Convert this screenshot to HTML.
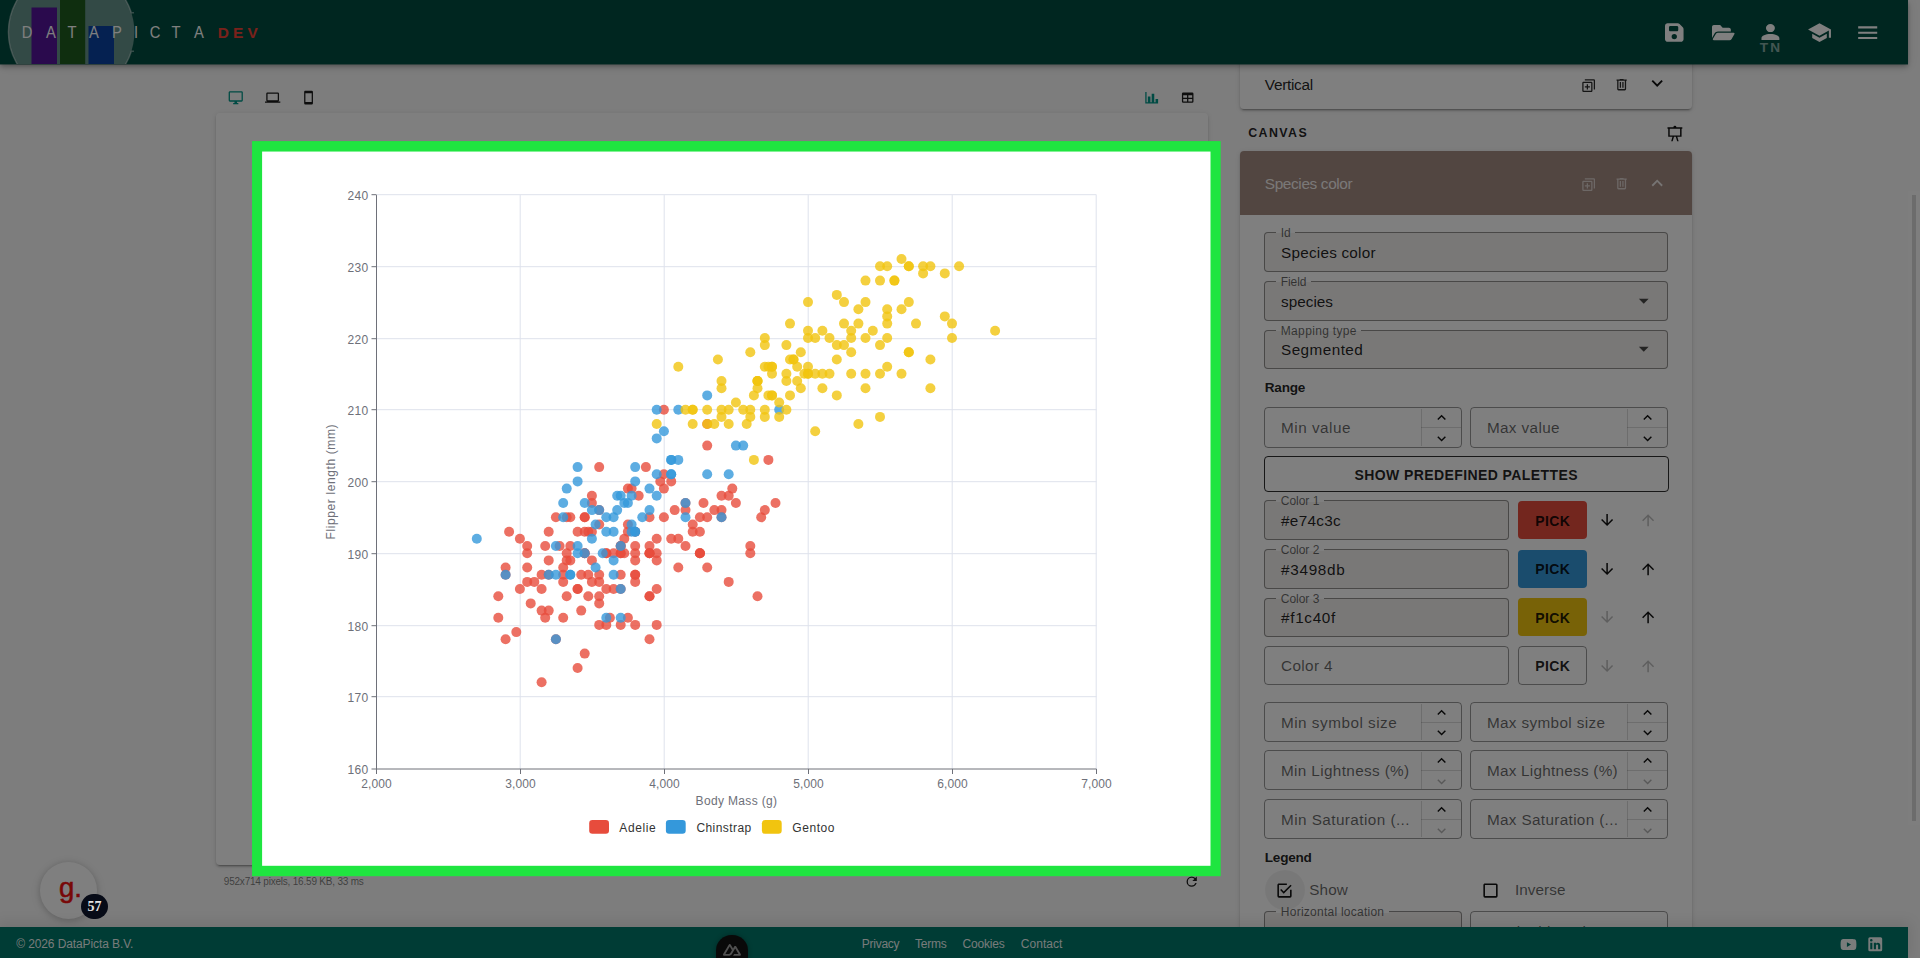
<!DOCTYPE html>
<html lang="en"><head><meta charset="utf-8"><title>DataPicta DEV</title>
<style>
html,body{margin:0;padding:0}
body{width:1920px;height:958px;overflow:hidden;position:relative;background:#fafafa;font-family:"Liberation Sans",sans-serif}
#app,#ov{position:absolute;left:0;top:0;width:1920px;height:958px;overflow:hidden}
#app{z-index:0}
#ov{background:rgba(0,0,0,.5);z-index:10}
svg{display:block;overflow:visible}
</style></head><body>
<div id="app"><div style="position:absolute;left:0;top:64px;width:1908px;height:1px;background:rgba(0,77,64,.45);z-index:6"></div><div style="position:absolute;left:0;top:0;width:1908px;height:64px;background:#004d40;z-index:5;box-shadow:0 2px 4px -1px rgba(0,0,0,.2),0 4px 5px 0 rgba(0,0,0,.14),0 1px 10px 0 rgba(0,0,0,.12)"><svg style="position:absolute;left:0;top:0;width:300px;height:64px;overflow:hidden" viewBox="0 0 300 64"><circle cx="71.4" cy="32" r="63" fill="rgba(255,255,255,.4)"/><rect x="31.5" y="7.5" width="25.5" height="60" fill="#54149a"/><rect x="60" y="-2" width="25.2" height="70" fill="#1f5c1f"/><rect x="88.5" y="26" width="25.5" height="40" fill="#0a43a2"/><path d="M134 12.8H131.4A63 63 0 1 0 131.4 51.2H134" fill="none" stroke="rgba(255,255,255,.42)" stroke-width="1.4"/></svg><span id="t1" style="position:absolute;left:27.3px;top:32.3px;transform:translate(-50%,-50%);white-space:nowrap;font:400 16.4px/1 'Liberation Sans',sans-serif;color:#fff;letter-spacing:0.000px;transform:translate(-50%,-50%) scaleX(.9);">D</span><span id="t2" style="position:absolute;left:50.6px;top:32.3px;transform:translate(-50%,-50%);white-space:nowrap;font:400 16.4px/1 'Liberation Sans',sans-serif;color:#fff;letter-spacing:0.000px;transform:translate(-50%,-50%) scaleX(.9);">A</span><span id="t3" style="position:absolute;left:71.6px;top:32.3px;transform:translate(-50%,-50%);white-space:nowrap;font:400 16.4px/1 'Liberation Sans',sans-serif;color:#fff;letter-spacing:0.000px;transform:translate(-50%,-50%) scaleX(.9);">T</span><span id="t4" style="position:absolute;left:94.1px;top:32.3px;transform:translate(-50%,-50%);white-space:nowrap;font:400 16.4px/1 'Liberation Sans',sans-serif;color:#fff;letter-spacing:0.000px;transform:translate(-50%,-50%) scaleX(.9);">A</span><span id="t5" style="position:absolute;left:116.6px;top:32.3px;transform:translate(-50%,-50%);white-space:nowrap;font:400 16.4px/1 'Liberation Sans',sans-serif;color:#fff;letter-spacing:0.000px;transform:translate(-50%,-50%) scaleX(.9);">P</span><span id="t6" style="position:absolute;left:135.7px;top:32.3px;transform:translate(-50%,-50%);white-space:nowrap;font:400 16.4px/1 'Liberation Sans',sans-serif;color:#fff;letter-spacing:0.000px;transform:translate(-50%,-50%) scaleX(.9);">I</span><span id="t7" style="position:absolute;left:154.7px;top:32.3px;transform:translate(-50%,-50%);white-space:nowrap;font:400 16.4px/1 'Liberation Sans',sans-serif;color:#fff;letter-spacing:0.000px;transform:translate(-50%,-50%) scaleX(.9);">C</span><span id="t8" style="position:absolute;left:176.3px;top:32.3px;transform:translate(-50%,-50%);white-space:nowrap;font:400 16.4px/1 'Liberation Sans',sans-serif;color:#fff;letter-spacing:0.000px;transform:translate(-50%,-50%) scaleX(.9);">T</span><span id="t9" style="position:absolute;left:198.5px;top:32.3px;transform:translate(-50%,-50%);white-space:nowrap;font:400 16.4px/1 'Liberation Sans',sans-serif;color:#fff;letter-spacing:0.000px;transform:translate(-50%,-50%) scaleX(.9);">A</span><span id="dev" style="position:absolute;left:217.7px;top:32.9px;transform:translateY(-50%);white-space:nowrap;font:700 15.4px/1 'Liberation Sans',sans-serif;color:#f44336;letter-spacing:4.249px;">DEV</span><svg style="position:absolute;left:1664.72px;top:21.60px;width:18.55px;height:21.20px;" viewBox="0 0 448 512" preserveAspectRatio="none"><path fill="#fff" d="M64 32C28.7 32 0 60.7 0 96v320c0 35.3 28.7 64 64 64h320c35.3 0 64-28.7 64-64V173.3c0-17-6.7-33.3-18.7-45.3L352 50.7c-12-12-28.3-18.7-45.3-18.7zm32 96c0-17.7 14.3-32 32-32h160c17.7 0 32 14.3 32 32v64c0 17.7-14.3 32-32 32H128c-17.7 0-32-14.3-32-32zm128 160a64 64 0 1 1 0 128 64 64 0 1 1 0-128"/></svg><svg style="position:absolute;left:1711.50px;top:21.85px;width:22.60px;height:21.31px" viewBox="0 0 576 512"><path fill="#fff" d="M572.694 292.093L500.27 416.248A63.997 63.997 0 0 1 444.989 448H45.025c-18.523 0-30.064-20.093-20.731-36.093l72.424-124.155A64 64 0 0 1 152 256h399.964c18.523 0 30.064 20.093 20.73 36.093zM152 224h328v-48c0-26.51-21.49-48-48-48H272l-64-64H48C21.49 64 0 85.49 0 112v278.046l69.077-118.418C86.214 242.25 117.989 224 152 224z"/></svg><svg style="position:absolute;left:1757.38px;top:19.88px;width:26.85px;height:24.15px;" viewBox="0 0 24 24" preserveAspectRatio="none"><path fill="#fff" d="M12 4a4 4 0 0 1 4 4 4 4 0 0 1-4 4 4 4 0 0 1-4-4 4 4 0 0 1 4-4m0 10c4.42 0 8 1.79 8 4v2H4v-2c0-2.21 3.58-4 8-4"/></svg><span id="tn" style="position:absolute;left:1771.1px;top:47.6px;transform:translate(-50%,-50%);white-space:nowrap;font:700 13.6px/1 'Liberation Sans',sans-serif;color:rgba(255,255,255,.55);letter-spacing:2.286px;">TN</span><svg style="position:absolute;left:1806.85px;top:19.80px;width:25.00px;height:25.00px;" viewBox="0 0 24 24" preserveAspectRatio="none"><path fill="#fff" d="M12 3 1 9l11 6 9-4.91V17h2V9M5 13.18v4L12 21l7-3.82v-4L12 17z"/></svg><svg style="position:absolute;left:1854.80px;top:19.55px;width:25.40px;height:25.40px;" viewBox="0 0 24 24" preserveAspectRatio="none"><path fill="#fff" d="M3 6h18v2H3zm0 5h18v2H3zm0 5h18v2H3z"/></svg></div><svg style="position:absolute;left:228.25px;top:89.60px;width:15.50px;height:15.50px;" viewBox="0 0 24 24" preserveAspectRatio="none"><path fill="#009688" d="M21 16H3V4h18m0-2H3c-1.11 0-2 .89-2 2v12a2 2 0 0 0 2 2h7v2H8v2h8v-2h-2v-2h7a2 2 0 0 0 2-2V4a2 2 0 0 0-2-2"/></svg><svg style="position:absolute;left:264.70px;top:89.55px;width:15.30px;height:15.30px;" viewBox="0 0 24 24" preserveAspectRatio="none"><path fill="#1a1a1a" d="M4 6h16v10H4m16 2a2 2 0 0 0 2-2V6a2 2 0 0 0-2-2H4c-1.11 0-2 .89-2 2v10a2 2 0 0 0 2 2H0v2h24v-2z"/></svg><svg style="position:absolute;left:301.05px;top:89.65px;width:15.10px;height:15.10px;" viewBox="0 0 24 24" preserveAspectRatio="none"><path fill="#1a1a1a" d="M17 19H7V5h10m0-4H7c-1.11 0-2 .89-2 2v18a2 2 0 0 0 2 2h10a2 2 0 0 0 2-2V3a2 2 0 0 0-2-2"/></svg><svg style="position:absolute;left:1143.70px;top:89.90px;width:15.40px;height:15.40px;" viewBox="0 0 24 24" preserveAspectRatio="none"><path fill="#009688" d="M22 21H2V3h2v16h2v-9h4v9h2V6h4v13h2v-5h4z"/></svg><svg style="position:absolute;left:1180.20px;top:89.50px;width:15.40px;height:15.40px;" viewBox="0 0 24 24" preserveAspectRatio="none"><path fill="#1a1a1a" d="M5 4h14a2 2 0 0 1 2 2v12a2 2 0 0 1-2 2H5a2 2 0 0 1-2-2V6a2 2 0 0 1 2-2m0 4v4h6V8zm8 0v4h6V8zm-8 6v4h6v-4zm8 0v4h6v-4z"/></svg><div style="position:absolute;left:216px;top:113px;width:992px;height:752px;background:#fff;border-radius:4px;box-shadow:0 3px 1px -2px rgba(0,0,0,.2),0 2px 2px 0 rgba(0,0,0,.14),0 1px 5px 0 rgba(0,0,0,.12)"></div><span id="pix" style="position:absolute;left:223.8px;top:881.7px;transform:translateY(-50%);white-space:nowrap;font:400 10px/1 'Liberation Sans',sans-serif;color:rgba(0,0,0,.52);letter-spacing:-0.207px;">952x714 pixels, 16.59 KB, 33 ms</span><svg style="position:absolute;left:1184.10px;top:873.90px;width:15.40px;height:15.40px;" viewBox="0 0 24 24" preserveAspectRatio="none"><path fill="#1a1a1a" d="M17.65 6.35A7.96 7.96 0 0 0 12 4a8 8 0 0 0-8 8 8 8 0 0 0 8 8c3.73 0 6.84-2.55 7.73-6h-2.08A5.99 5.99 0 0 1 12 18a6 6 0 0 1-6-6 6 6 0 0 1 6-6c1.66 0 3.14.69 4.22 1.78L13 11h7V4z"/></svg><div style="position:absolute;left:40px;top:862px;width:57px;height:57px;border-radius:50%;background:#fff;box-shadow:0 1px 6px rgba(0,0,0,.18),0 2px 12px rgba(0,0,0,.08)"></div><span id="g" style="position:absolute;left:59.0px;top:887.6px;transform:translateY(-50%);white-space:nowrap;font:400 27.5px/1 'Liberation Sans',sans-serif;color:#f01010;letter-spacing:0.000px;-webkit-text-stroke:.55px #f01010;">g.</span><div style="position:absolute;left:1240.3px;top:40px;width:451.5px;height:69px;background:#fff;border-radius:4px;box-shadow:0 3px 1px -2px rgba(0,0,0,.2),0 2px 2px 0 rgba(0,0,0,.14),0 1px 5px 0 rgba(0,0,0,.12);"></div><span id="vert" style="position:absolute;left:1264.8px;top:84.6px;transform:translateY(-50%);white-space:nowrap;font:400 15.4px/1 'Liberation Sans',sans-serif;color:rgba(0,0,0,.87);letter-spacing:-0.309px;">Vertical</span><svg style="position:absolute;left:1581.05px;top:77.70px;width:15.30px;height:15.30px;transform:rotate(180deg);" viewBox="0 0 24 24" preserveAspectRatio="none"><path fill="#2a2a2a" d="M18 11h-3v3h-2v-3h-3V9h3V6h2v3h3m2-5v12H8V4zm0-2H8c-1.1 0-2 .9-2 2v12a2 2 0 0 0 2 2h12c1.11 0 2-.89 2-2V4a2 2 0 0 0-2-2M4 6H2v14a2 2 0 0 0 2 2h14v-2H4z"/></svg><svg style="position:absolute;left:1613.65px;top:77.35px;width:15.30px;height:15.30px;" viewBox="0 0 24 24" preserveAspectRatio="none"><path fill="#2a2a2a" d="M9 3v1H4v2h1v13a2 2 0 0 0 2 2h10a2 2 0 0 0 2-2V6h1V4h-5V3zM7 6h10v13H7zm2 2v9h2V8zm4 0v9h2V8z"/></svg><svg style="position:absolute;left:1645.65px;top:71.80px;width:22.40px;height:22.40px;" viewBox="0 0 24 24" preserveAspectRatio="none"><path fill="#111" d="M7.41 8.58 12 13.17l4.59-4.59L18 10l-6 6-6-6z"/></svg><span id="canvas" style="position:absolute;left:1248.2px;top:132.9px;transform:translateY(-50%);white-space:nowrap;font:700 12.4px/1 'Liberation Sans',sans-serif;color:rgba(0,0,0,.87);letter-spacing:1.432px;">CANVAS</span><svg style="position:absolute;left:1666.10px;top:125.20px;width:17.80px;height:17.80px;" viewBox="0 0 24 24" preserveAspectRatio="none"><path fill="#111" d="M2 3h8a2 2 0 0 1 2-2 2 2 0 0 1 2 2h8v2h-1v11h-5.75L17 22h-2l-1.75-6h-2.5L9 22H7l1.75-6H3V5H2zm3 2v9h14V5z"/></svg><div style="position:absolute;left:1240.3px;top:151.3px;width:451.5px;height:848.7px;background:#fff;border-radius:4px 4px 0 0;box-shadow:0 3px 1px -2px rgba(0,0,0,.2),0 2px 2px 0 rgba(0,0,0,.14),0 1px 5px 0 rgba(0,0,0,.12);"></div><div style="position:absolute;left:1240.3px;top:151.3px;width:451.5px;height:64.19999999999999px;background:#a58c83;border-radius:4px 4px 0 0;"></div><span id="spc" style="position:absolute;left:1264.8px;top:184.4px;transform:translateY(-50%);white-space:nowrap;font:400 15.4px/1 'Liberation Sans',sans-serif;color:rgba(255,255,255,.9);letter-spacing:-0.377px;">Species color</span><svg style="position:absolute;left:1581.05px;top:176.70px;width:15.30px;height:15.30px;transform:rotate(180deg);" viewBox="0 0 24 24" preserveAspectRatio="none"><path fill="rgba(255,255,255,.6)" d="M18 11h-3v3h-2v-3h-3V9h3V6h2v3h3m2-5v12H8V4zm0-2H8c-1.1 0-2 .9-2 2v12a2 2 0 0 0 2 2h12c1.11 0 2-.89 2-2V4a2 2 0 0 0-2-2M4 6H2v14a2 2 0 0 0 2 2h14v-2H4z"/></svg><svg style="position:absolute;left:1613.65px;top:176.35px;width:15.30px;height:15.30px;" viewBox="0 0 24 24" preserveAspectRatio="none"><path fill="rgba(255,255,255,.6)" d="M9 3v1H4v2h1v13a2 2 0 0 0 2 2h10a2 2 0 0 0 2-2V6h1V4h-5V3zM7 6h10v13H7zm2 2v9h2V8zm4 0v9h2V8z"/></svg><svg style="position:absolute;left:1645.65px;top:172.40px;width:22.40px;height:22.40px;" viewBox="0 0 24 24" preserveAspectRatio="none"><path fill="rgba(255,255,255,.8)" d="M7.41 15.41 12 10.83l4.59 4.58L18 14l-6-6-6 6z"/></svg><div style="position:absolute;left:1264.1px;top:231.9px;width:404.3000000000002px;height:39.99999999999997px;box-sizing:border-box;border:1px solid rgba(0,0,0,.4);border-radius:4px;background:rgba(161,136,127,.13);"></div><div style="position:absolute;left:1276.1px;top:231.4px;width:18.59999999999991px;height:3.0px;background:#fff;"></div><div style="position:absolute;left:1276.1px;top:233.4px;width:18.59999999999991px;height:1.0px;background:rgba(161,136,127,.13);"></div><span id="idl" style="position:absolute;left:1280.8px;top:232.9px;transform:translateY(-50%);white-space:nowrap;font:400 12px/1 'Liberation Sans',sans-serif;color:rgba(0,0,0,.6);letter-spacing:-0.205px;">Id</span><span id="idv" style="position:absolute;left:1281.0px;top:252.79999999999998px;transform:translateY(-50%);white-space:nowrap;font:400 15.3px/1 'Liberation Sans',sans-serif;color:rgba(0,0,0,.87);letter-spacing:0.228px;">Species color</span><div style="position:absolute;left:1264.1px;top:280.7px;width:404.3000000000002px;height:39.900000000000034px;box-sizing:border-box;border:1px solid rgba(0,0,0,.4);border-radius:4px;background:rgba(161,136,127,.13);"></div><div style="position:absolute;left:1276.1px;top:280.2px;width:34.5px;height:3.0px;background:#fff;"></div><div style="position:absolute;left:1276.1px;top:282.2px;width:34.5px;height:1.0px;background:rgba(161,136,127,.13);"></div><span id="fldl" style="position:absolute;left:1280.8px;top:281.7px;transform:translateY(-50%);white-space:nowrap;font:400 12px/1 'Liberation Sans',sans-serif;color:rgba(0,0,0,.6);letter-spacing:-0.103px;">Field</span><span id="fldv" style="position:absolute;left:1281.0px;top:301.54999999999995px;transform:translateY(-50%);white-space:nowrap;font:400 15.3px/1 'Liberation Sans',sans-serif;color:rgba(0,0,0,.87);letter-spacing:0.018px;">species</span><svg style="position:absolute;left:1631.95px;top:288.75px;width:23.50px;height:23.50px;" viewBox="0 0 24 24" preserveAspectRatio="none"><path fill="rgba(0,0,0,.7)" d="m7 10 5 5 5-5z"/></svg><div style="position:absolute;left:1264.1px;top:329.5px;width:404.3000000000002px;height:39.5px;box-sizing:border-box;border:1px solid rgba(0,0,0,.4);border-radius:4px;background:rgba(161,136,127,.13);"></div><div style="position:absolute;left:1276.1px;top:329px;width:85.0px;height:3px;background:#fff;"></div><div style="position:absolute;left:1276.1px;top:331px;width:85.0px;height:1px;background:rgba(161,136,127,.13);"></div><span id="mapl" style="position:absolute;left:1280.8px;top:330.5px;transform:translateY(-50%);white-space:nowrap;font:400 12px/1 'Liberation Sans',sans-serif;color:rgba(0,0,0,.6);letter-spacing:0.329px;">Mapping type</span><span id="mapv" style="position:absolute;left:1281.0px;top:350.15px;transform:translateY(-50%);white-space:nowrap;font:400 15.3px/1 'Liberation Sans',sans-serif;color:rgba(0,0,0,.87);letter-spacing:0.450px;">Segmented</span><svg style="position:absolute;left:1631.95px;top:337.45px;width:23.50px;height:23.50px;" viewBox="0 0 24 24" preserveAspectRatio="none"><path fill="rgba(0,0,0,.7)" d="m7 10 5 5 5-5z"/></svg><span id="range" style="position:absolute;left:1264.8px;top:388.0px;transform:translateY(-50%);white-space:nowrap;font:700 13.6px/1 'Liberation Sans',sans-serif;color:rgba(0,0,0,.87);letter-spacing:-0.270px;">Range</span><div style="position:absolute;left:1264.1px;top:407.3px;width:198.10000000000014px;height:40.599999999999966px;box-sizing:border-box;border:1px solid rgba(0,0,0,.4);border-radius:4px;background:transparent;"></div><span id="minvp" style="position:absolute;left:1281.0px;top:428.3px;transform:translateY(-50%);white-space:nowrap;font:400 15.3px/1 'Liberation Sans',sans-serif;color:rgba(0,0,0,.6);letter-spacing:0.503px;">Min value</span><div style="position:absolute;left:1420.5px;top:408.8px;width:1.0px;height:37.599999999999966px;background:rgba(0,0,0,.14);"></div><div style="position:absolute;left:1420.5px;top:427.1px;width:40.200000000000045px;height:1.0px;background:rgba(0,0,0,.14);"></div><svg style="position:absolute;left:1432.80px;top:409.20px;width:17.20px;height:17.20px;" viewBox="0 0 24 24" preserveAspectRatio="none"><path fill="#111" d="M7.41 15.41 12 10.83l4.59 4.58L18 14l-6-6-6 6z"/></svg><svg style="position:absolute;left:1432.80px;top:430.00px;width:17.20px;height:17.20px;" viewBox="0 0 24 24" preserveAspectRatio="none"><path fill="#111" d="M7.41 8.58 12 13.17l4.59-4.59L18 10l-6 6-6-6z"/></svg><div style="position:absolute;left:1470.0px;top:407.3px;width:198.4000000000001px;height:40.599999999999966px;box-sizing:border-box;border:1px solid rgba(0,0,0,.4);border-radius:4px;background:transparent;"></div><span id="maxvp" style="position:absolute;left:1486.9px;top:428.3px;transform:translateY(-50%);white-space:nowrap;font:400 15.3px/1 'Liberation Sans',sans-serif;color:rgba(0,0,0,.6);letter-spacing:0.365px;">Max value</span><div style="position:absolute;left:1626.7px;top:408.8px;width:1.0px;height:37.599999999999966px;background:rgba(0,0,0,.14);"></div><div style="position:absolute;left:1626.7px;top:427.1px;width:40.200000000000045px;height:1.0px;background:rgba(0,0,0,.14);"></div><svg style="position:absolute;left:1639.00px;top:409.20px;width:17.20px;height:17.20px;" viewBox="0 0 24 24" preserveAspectRatio="none"><path fill="#111" d="M7.41 15.41 12 10.83l4.59 4.58L18 14l-6-6-6 6z"/></svg><svg style="position:absolute;left:1639.00px;top:430.00px;width:17.20px;height:17.20px;" viewBox="0 0 24 24" preserveAspectRatio="none"><path fill="#111" d="M7.41 8.58 12 13.17l4.59-4.59L18 10l-6 6-6-6z"/></svg><div style="position:absolute;left:1264.0px;top:456.0px;width:404.5px;height:36.0px;box-sizing:border-box;border:1.3px solid rgba(0,0,0,.82);border-radius:4px;"></div><span id="btn" style="position:absolute;left:1466.2px;top:474.6px;transform:translate(-50%,-50%);white-space:nowrap;font:700 14px/1 'Liberation Sans',sans-serif;color:rgba(0,0,0,.87);letter-spacing:0.406px;">SHOW PREDEFINED PALETTES</span><div style="position:absolute;left:1264.1px;top:500.4px;width:244.9000000000001px;height:39.700000000000045px;box-sizing:border-box;border:1px solid rgba(0,0,0,.4);border-radius:4px;background:rgba(161,136,127,.13);"></div><div style="position:absolute;left:1276.1px;top:499.9px;width:47.5px;height:3.0px;background:#fff;"></div><div style="position:absolute;left:1276.1px;top:501.9px;width:47.5px;height:1.0px;background:rgba(161,136,127,.13);"></div><span id="c0l" style="position:absolute;left:1280.8px;top:501.4px;transform:translateY(-50%);white-space:nowrap;font:400 12px/1 'Liberation Sans',sans-serif;color:rgba(0,0,0,.6);letter-spacing:-0.027px;">Color 1</span><span id="c0v" style="position:absolute;left:1281.0px;top:521.15px;transform:translateY(-50%);white-space:nowrap;font:400 15.3px/1 'Liberation Sans',sans-serif;color:rgba(0,0,0,.87);letter-spacing:0.308px;">#e74c3c</span><div style="position:absolute;left:1517.6px;top:501.09999999999997px;width:69.10000000000014px;height:38.10000000000008px;background:#e74c3c;border-radius:4px;"></div><span id="pk0" style="position:absolute;left:1552.7px;top:520.65px;transform:translate(-50%,-50%);white-space:nowrap;font:700 14px/1 'Liberation Sans',sans-serif;color:rgba(0,0,0,.87);letter-spacing:0.360px;">PICK</span><svg style="position:absolute;left:1598.40px;top:511.35px;width:18.20px;height:18.20px;" viewBox="0 0 24 24" preserveAspectRatio="none"><path fill="#111" d="M11 4h2v12l5.5-5.5 1.42 1.42L12 19.84l-7.92-7.92L5.5 10.5 11 16z"/></svg><svg style="position:absolute;left:1638.50px;top:511.35px;width:18.20px;height:18.20px;" viewBox="0 0 24 24" preserveAspectRatio="none"><path fill="rgba(0,0,0,.26)" d="M13 20h-2V8l-5.5 5.5-1.42-1.42L12 4.16l7.92 7.92-1.42 1.42L13 8z"/></svg><div style="position:absolute;left:1264.1px;top:549.2px;width:244.9000000000001px;height:39.59999999999991px;box-sizing:border-box;border:1px solid rgba(0,0,0,.4);border-radius:4px;background:rgba(161,136,127,.13);"></div><div style="position:absolute;left:1276.1px;top:548.7px;width:47.5px;height:3.0px;background:#fff;"></div><div style="position:absolute;left:1276.1px;top:550.7px;width:47.5px;height:1.0px;background:rgba(161,136,127,.13);"></div><span id="c1l" style="position:absolute;left:1280.8px;top:550.2px;transform:translateY(-50%);white-space:nowrap;font:400 12px/1 'Liberation Sans',sans-serif;color:rgba(0,0,0,.6);letter-spacing:-0.027px;">Color 2</span><span id="c1v" style="position:absolute;left:1281.0px;top:569.9px;transform:translateY(-50%);white-space:nowrap;font:400 15.3px/1 'Liberation Sans',sans-serif;color:rgba(0,0,0,.87);letter-spacing:0.705px;">#3498db</span><div style="position:absolute;left:1517.6px;top:549.9000000000001px;width:69.10000000000014px;height:37.999999999999886px;background:#3498db;border-radius:4px;"></div><span id="pk1" style="position:absolute;left:1552.7px;top:569.4px;transform:translate(-50%,-50%);white-space:nowrap;font:700 14px/1 'Liberation Sans',sans-serif;color:rgba(0,0,0,.87);letter-spacing:0.360px;">PICK</span><svg style="position:absolute;left:1598.40px;top:560.10px;width:18.20px;height:18.20px;" viewBox="0 0 24 24" preserveAspectRatio="none"><path fill="#111" d="M11 4h2v12l5.5-5.5 1.42 1.42L12 19.84l-7.92-7.92L5.5 10.5 11 16z"/></svg><svg style="position:absolute;left:1638.50px;top:560.10px;width:18.20px;height:18.20px;" viewBox="0 0 24 24" preserveAspectRatio="none"><path fill="#111" d="M13 20h-2V8l-5.5 5.5-1.42-1.42L12 4.16l7.92 7.92-1.42 1.42L13 8z"/></svg><div style="position:absolute;left:1264.1px;top:597.5px;width:244.9000000000001px;height:39.60000000000002px;box-sizing:border-box;border:1px solid rgba(0,0,0,.4);border-radius:4px;background:rgba(161,136,127,.13);"></div><div style="position:absolute;left:1276.1px;top:597.0px;width:47.5px;height:3.0px;background:#fff;"></div><div style="position:absolute;left:1276.1px;top:599.0px;width:47.5px;height:1.0px;background:rgba(161,136,127,.13);"></div><span id="c2l" style="position:absolute;left:1280.8px;top:598.5px;transform:translateY(-50%);white-space:nowrap;font:400 12px/1 'Liberation Sans',sans-serif;color:rgba(0,0,0,.6);letter-spacing:-0.027px;">Color 3</span><span id="c2v" style="position:absolute;left:1281.0px;top:618.1999999999999px;transform:translateY(-50%);white-space:nowrap;font:400 15.3px/1 'Liberation Sans',sans-serif;color:rgba(0,0,0,.87);letter-spacing:0.688px;">#f1c40f</span><div style="position:absolute;left:1517.6px;top:598.2px;width:69.10000000000014px;height:38.0px;background:#f1c40f;border-radius:4px;"></div><span id="pk2" style="position:absolute;left:1552.7px;top:617.6999999999999px;transform:translate(-50%,-50%);white-space:nowrap;font:700 14px/1 'Liberation Sans',sans-serif;color:rgba(0,0,0,.87);letter-spacing:0.360px;">PICK</span><svg style="position:absolute;left:1598.40px;top:608.40px;width:18.20px;height:18.20px;" viewBox="0 0 24 24" preserveAspectRatio="none"><path fill="rgba(0,0,0,.26)" d="M11 4h2v12l5.5-5.5 1.42 1.42L12 19.84l-7.92-7.92L5.5 10.5 11 16z"/></svg><svg style="position:absolute;left:1638.50px;top:608.40px;width:18.20px;height:18.20px;" viewBox="0 0 24 24" preserveAspectRatio="none"><path fill="#111" d="M13 20h-2V8l-5.5 5.5-1.42-1.42L12 4.16l7.92 7.92-1.42 1.42L13 8z"/></svg><div style="position:absolute;left:1264.1px;top:645.7px;width:244.9000000000001px;height:39.799999999999955px;box-sizing:border-box;border:1px solid rgba(0,0,0,.4);border-radius:4px;background:transparent;"></div><span id="c3p" style="position:absolute;left:1281.0px;top:666.3000000000001px;transform:translateY(-50%);white-space:nowrap;font:400 15.3px/1 'Liberation Sans',sans-serif;color:rgba(0,0,0,.6);letter-spacing:0.384px;">Color 4</span><div style="position:absolute;left:1517.6px;top:646.2px;width:69.10000000000014px;height:38.799999999999955px;box-sizing:border-box;border:1px solid rgba(0,0,0,.4);border-radius:4px;"></div><span id="pk3" style="position:absolute;left:1552.7px;top:666.0px;transform:translate(-50%,-50%);white-space:nowrap;font:700 14px/1 'Liberation Sans',sans-serif;color:rgba(0,0,0,.87);letter-spacing:0.360px;">PICK</span><svg style="position:absolute;left:1598.40px;top:656.70px;width:18.20px;height:18.20px;" viewBox="0 0 24 24" preserveAspectRatio="none"><path fill="rgba(0,0,0,.26)" d="M11 4h2v12l5.5-5.5 1.42 1.42L12 19.84l-7.92-7.92L5.5 10.5 11 16z"/></svg><svg style="position:absolute;left:1638.50px;top:656.70px;width:18.20px;height:18.20px;" viewBox="0 0 24 24" preserveAspectRatio="none"><path fill="rgba(0,0,0,.26)" d="M13 20h-2V8l-5.5 5.5-1.42-1.42L12 4.16l7.92 7.92-1.42 1.42L13 8z"/></svg><div style="position:absolute;left:1264.1px;top:702.1px;width:198.10000000000014px;height:39.89999999999998px;box-sizing:border-box;border:1px solid rgba(0,0,0,.4);border-radius:4px;background:transparent;"></div><span id="n0ap" style="position:absolute;left:1281.0px;top:722.75px;transform:translateY(-50%);white-space:nowrap;font:400 15.3px/1 'Liberation Sans',sans-serif;color:rgba(0,0,0,.6);letter-spacing:0.492px;">Min symbol size</span><div style="position:absolute;left:1420.5px;top:703.6px;width:1.0px;height:36.89999999999998px;background:rgba(0,0,0,.14);"></div><div style="position:absolute;left:1420.5px;top:721.55px;width:40.200000000000045px;height:1.0px;background:rgba(0,0,0,.14);"></div><svg style="position:absolute;left:1432.80px;top:703.65px;width:17.20px;height:17.20px;" viewBox="0 0 24 24" preserveAspectRatio="none"><path fill="#111" d="M7.41 15.41 12 10.83l4.59 4.58L18 14l-6-6-6 6z"/></svg><svg style="position:absolute;left:1432.80px;top:724.45px;width:17.20px;height:17.20px;" viewBox="0 0 24 24" preserveAspectRatio="none"><path fill="#111" d="M7.41 8.58 12 13.17l4.59-4.59L18 10l-6 6-6-6z"/></svg><div style="position:absolute;left:1470.0px;top:702.1px;width:198.4000000000001px;height:39.89999999999998px;box-sizing:border-box;border:1px solid rgba(0,0,0,.4);border-radius:4px;background:transparent;"></div><span id="n0bp" style="position:absolute;left:1486.9px;top:722.75px;transform:translateY(-50%);white-space:nowrap;font:400 15.3px/1 'Liberation Sans',sans-serif;color:rgba(0,0,0,.6);letter-spacing:0.362px;">Max symbol size</span><div style="position:absolute;left:1626.7px;top:703.6px;width:1.0px;height:36.89999999999998px;background:rgba(0,0,0,.14);"></div><div style="position:absolute;left:1626.7px;top:721.55px;width:40.200000000000045px;height:1.0px;background:rgba(0,0,0,.14);"></div><svg style="position:absolute;left:1639.00px;top:703.65px;width:17.20px;height:17.20px;" viewBox="0 0 24 24" preserveAspectRatio="none"><path fill="#111" d="M7.41 15.41 12 10.83l4.59 4.58L18 14l-6-6-6 6z"/></svg><svg style="position:absolute;left:1639.00px;top:724.45px;width:17.20px;height:17.20px;" viewBox="0 0 24 24" preserveAspectRatio="none"><path fill="#111" d="M7.41 8.58 12 13.17l4.59-4.59L18 10l-6 6-6-6z"/></svg><div style="position:absolute;left:1264.1px;top:750.4px;width:198.10000000000014px;height:39.80000000000007px;box-sizing:border-box;border:1px solid rgba(0,0,0,.4);border-radius:4px;background:transparent;"></div><span id="n1ap" style="position:absolute;left:1281.0px;top:771.0px;transform:translateY(-50%);white-space:nowrap;font:400 15.3px/1 'Liberation Sans',sans-serif;color:rgba(0,0,0,.6);letter-spacing:0.357px;">Min Lightness (%)</span><div style="position:absolute;left:1420.5px;top:751.9px;width:1.0px;height:36.80000000000007px;background:rgba(0,0,0,.14);"></div><div style="position:absolute;left:1420.5px;top:769.8px;width:40.200000000000045px;height:1.0px;background:rgba(0,0,0,.14);"></div><svg style="position:absolute;left:1432.80px;top:751.90px;width:17.20px;height:17.20px;" viewBox="0 0 24 24" preserveAspectRatio="none"><path fill="#111" d="M7.41 15.41 12 10.83l4.59 4.58L18 14l-6-6-6 6z"/></svg><svg style="position:absolute;left:1432.80px;top:772.70px;width:17.20px;height:17.20px;" viewBox="0 0 24 24" preserveAspectRatio="none"><path fill="rgba(0,0,0,.3)" d="M7.41 8.58 12 13.17l4.59-4.59L18 10l-6 6-6-6z"/></svg><div style="position:absolute;left:1470.0px;top:750.4px;width:198.4000000000001px;height:39.80000000000007px;box-sizing:border-box;border:1px solid rgba(0,0,0,.4);border-radius:4px;background:transparent;"></div><span id="n1bp" style="position:absolute;left:1486.9px;top:771.0px;transform:translateY(-50%);white-space:nowrap;font:400 15.3px/1 'Liberation Sans',sans-serif;color:rgba(0,0,0,.6);letter-spacing:0.254px;">Max Lightness (%)</span><div style="position:absolute;left:1626.7px;top:751.9px;width:1.0px;height:36.80000000000007px;background:rgba(0,0,0,.14);"></div><div style="position:absolute;left:1626.7px;top:769.8px;width:40.200000000000045px;height:1.0px;background:rgba(0,0,0,.14);"></div><svg style="position:absolute;left:1639.00px;top:751.90px;width:17.20px;height:17.20px;" viewBox="0 0 24 24" preserveAspectRatio="none"><path fill="#111" d="M7.41 15.41 12 10.83l4.59 4.58L18 14l-6-6-6 6z"/></svg><svg style="position:absolute;left:1639.00px;top:772.70px;width:17.20px;height:17.20px;" viewBox="0 0 24 24" preserveAspectRatio="none"><path fill="rgba(0,0,0,.3)" d="M7.41 8.58 12 13.17l4.59-4.59L18 10l-6 6-6-6z"/></svg><div style="position:absolute;left:1264.1px;top:799.4px;width:198.10000000000014px;height:39.60000000000002px;box-sizing:border-box;border:1px solid rgba(0,0,0,.4);border-radius:4px;background:transparent;"></div><span id="n2ap" style="position:absolute;left:1281.0px;top:819.9000000000001px;transform:translateY(-50%);white-space:nowrap;font:400 15.3px/1 'Liberation Sans',sans-serif;color:rgba(0,0,0,.6);letter-spacing:0.435px;">Min Saturation (...</span><div style="position:absolute;left:1420.5px;top:800.9px;width:1.0px;height:36.60000000000002px;background:rgba(0,0,0,.14);"></div><div style="position:absolute;left:1420.5px;top:818.7px;width:40.200000000000045px;height:1.0px;background:rgba(0,0,0,.14);"></div><svg style="position:absolute;left:1432.80px;top:800.80px;width:17.20px;height:17.20px;" viewBox="0 0 24 24" preserveAspectRatio="none"><path fill="#111" d="M7.41 15.41 12 10.83l4.59 4.58L18 14l-6-6-6 6z"/></svg><svg style="position:absolute;left:1432.80px;top:821.60px;width:17.20px;height:17.20px;" viewBox="0 0 24 24" preserveAspectRatio="none"><path fill="rgba(0,0,0,.3)" d="M7.41 8.58 12 13.17l4.59-4.59L18 10l-6 6-6-6z"/></svg><div style="position:absolute;left:1470.0px;top:799.4px;width:198.4000000000001px;height:39.60000000000002px;box-sizing:border-box;border:1px solid rgba(0,0,0,.4);border-radius:4px;background:transparent;"></div><span id="n2bp" style="position:absolute;left:1486.9px;top:819.9000000000001px;transform:translateY(-50%);white-space:nowrap;font:400 15.3px/1 'Liberation Sans',sans-serif;color:rgba(0,0,0,.6);letter-spacing:0.343px;">Max Saturation (...</span><div style="position:absolute;left:1626.7px;top:800.9px;width:1.0px;height:36.60000000000002px;background:rgba(0,0,0,.14);"></div><div style="position:absolute;left:1626.7px;top:818.7px;width:40.200000000000045px;height:1.0px;background:rgba(0,0,0,.14);"></div><svg style="position:absolute;left:1639.00px;top:800.80px;width:17.20px;height:17.20px;" viewBox="0 0 24 24" preserveAspectRatio="none"><path fill="#111" d="M7.41 15.41 12 10.83l4.59 4.58L18 14l-6-6-6 6z"/></svg><svg style="position:absolute;left:1639.00px;top:821.60px;width:17.20px;height:17.20px;" viewBox="0 0 24 24" preserveAspectRatio="none"><path fill="rgba(0,0,0,.3)" d="M7.41 8.58 12 13.17l4.59-4.59L18 10l-6 6-6-6z"/></svg><span id="legend" style="position:absolute;left:1264.8px;top:857.8px;transform:translateY(-50%);white-space:nowrap;font:700 13.6px/1 'Liberation Sans',sans-serif;color:rgba(0,0,0,.87);letter-spacing:-0.257px;">Legend</span><div style="position:absolute;left:1264.7px;top:870.2px;width:40px;height:40px;border-radius:50%;background:rgba(0,0,0,.055)"></div><svg style="position:absolute;left:1275.10px;top:881.10px;width:19.00px;height:19.00px;" viewBox="0 0 24 24" preserveAspectRatio="none"><path fill="#111" d="M19 19H5V5h10V3H5c-1.11 0-2 .89-2 2v14a2 2 0 0 0 2 2h14a2 2 0 0 0 2-2v-8h-2m-11.09-.92L6.5 11.5 11 16 21 6l-1.41-1.42L11 13.17z"/></svg><span id="show" style="position:absolute;left:1309.3px;top:889.5px;transform:translateY(-50%);white-space:nowrap;font:400 15.3px/1 'Liberation Sans',sans-serif;color:rgba(0,0,0,.6);letter-spacing:0.081px;">Show</span><svg style="position:absolute;left:1480.80px;top:881.10px;width:19.00px;height:19.00px;" viewBox="0 0 24 24" preserveAspectRatio="none"><path fill="#111" d="M19 3H5c-1.11 0-2 .89-2 2v14a2 2 0 0 0 2 2h14a2 2 0 0 0 2-2V5a2 2 0 0 0-2-2m0 2v14H5V5z"/></svg><span id="inv" style="position:absolute;left:1515px;top:889.5px;transform:translateY(-50%);white-space:nowrap;font:400 15.3px/1 'Liberation Sans',sans-serif;color:rgba(0,0,0,.6);letter-spacing:0.047px;">Inverse</span><div style="position:absolute;left:1264.1px;top:911.4px;width:198.10000000000014px;height:40.700000000000045px;box-sizing:border-box;border:1px solid rgba(0,0,0,.4);border-radius:4px;background:rgba(161,136,127,.13);"></div><div style="position:absolute;left:1276.1px;top:910.9px;width:112.5px;height:3.0px;background:#fff;"></div><div style="position:absolute;left:1276.1px;top:912.9px;width:112.5px;height:1.0px;background:rgba(161,136,127,.13);"></div><span id="hll" style="position:absolute;left:1280.8px;top:912.4px;transform:translateY(-50%);white-space:nowrap;font:400 12px/1 'Liberation Sans',sans-serif;color:rgba(0,0,0,.6);letter-spacing:0.251px;">Horizontal location</span><span id="hlv" style="position:absolute;left:1281.0px;top:932.65px;transform:translateY(-50%);white-space:nowrap;font:400 15.3px/1 'Liberation Sans',sans-serif;color:rgba(0,0,0,.87);letter-spacing:0.680px;">Center</span><div style="position:absolute;left:1470.0px;top:911.4px;width:198.4000000000001px;height:40.700000000000045px;box-sizing:border-box;border:1px solid rgba(0,0,0,.4);border-radius:4px;background:transparent;"></div><span id="vlp" style="position:absolute;left:1486.9px;top:932.45px;transform:translateY(-50%);white-space:nowrap;font:400 15.3px/1 'Liberation Sans',sans-serif;color:rgba(0,0,0,.6);letter-spacing:0.639px;">Vertical location</span><div style="position:absolute;left:0;top:927px;width:1908px;height:31px;background:#00796b;z-index:4;box-shadow:0 -2px 14px 3px rgba(0,0,0,.085)"><span id="copy" style="position:absolute;left:16.2px;top:16.6px;transform:translateY(-50%);white-space:nowrap;font:400 12px/1 'Liberation Sans',sans-serif;color:rgba(255,255,255,.95);letter-spacing:-0.102px;">© 2026 DataPicta B.V.</span><span id="f1" style="position:absolute;left:861.8px;top:16.9px;transform:translateY(-50%);white-space:nowrap;font:400 12px/1 'Liberation Sans',sans-serif;color:rgba(255,255,255,.95);letter-spacing:-0.263px;">Privacy</span><span id="f2" style="position:absolute;left:915px;top:16.9px;transform:translateY(-50%);white-space:nowrap;font:400 12px/1 'Liberation Sans',sans-serif;color:rgba(255,255,255,.95);letter-spacing:-0.234px;">Terms</span><span id="f3" style="position:absolute;left:962.5px;top:16.9px;transform:translateY(-50%);white-space:nowrap;font:400 12px/1 'Liberation Sans',sans-serif;color:rgba(255,255,255,.95);letter-spacing:-0.194px;">Cookies</span><span id="f4" style="position:absolute;left:1020.8px;top:16.9px;transform:translateY(-50%);white-space:nowrap;font:400 12px/1 'Liberation Sans',sans-serif;color:rgba(255,255,255,.95);letter-spacing:0.048px;">Contact</span><svg style="position:absolute;left:1839.00px;top:8.20px;width:19.00px;height:19.00px;" viewBox="0 0 24 24" preserveAspectRatio="none"><path fill="rgba(255,255,255,.95)" d="m10 15 5.19-3L10 9zm11.56-7.83c.13.47.22 1.1.28 1.9.07.8.1 1.49.1 2.09L22 12c0 2.19-.16 3.8-.44 4.83-.25.9-.83 1.48-1.73 1.73-.47.13-1.33.22-2.65.28-1.3.07-2.49.1-3.59.1L12 19c-4.19 0-6.8-.16-7.83-.44-.9-.25-1.48-.83-1.73-1.73-.13-.47-.22-1.1-.28-1.9-.07-.8-.1-1.49-.1-2.09L2 12c0-2.19.16-3.8.44-4.83.25-.9.83-1.48 1.73-1.73.47-.13 1.33-.22 2.65-.28 1.3-.07 2.49-.1 3.59-.1L12 5c4.19 0 6.8.16 7.83.44.9.25 1.48.83 1.73 1.73"/></svg><svg style="position:absolute;left:1865.55px;top:8.45px;width:18.50px;height:18.50px;" viewBox="0 0 24 24" preserveAspectRatio="none"><path fill="rgba(255,255,255,.95)" d="M19 3a2 2 0 0 1 2 2v14a2 2 0 0 1-2 2H5a2 2 0 0 1-2-2V5a2 2 0 0 1 2-2zm-.5 15.5v-5.3a3.26 3.26 0 0 0-3.26-3.26c-.85 0-1.84.52-2.32 1.3v-1.11h-2.79v8.37h2.79v-4.93c0-.77.62-1.4 1.39-1.4a1.4 1.4 0 0 1 1.4 1.4v4.93zM6.88 8.56a1.68 1.68 0 0 0 1.68-1.68c0-.93-.75-1.69-1.68-1.69a1.69 1.69 0 0 0-1.69 1.69c0 .93.76 1.68 1.69 1.68m1.39 9.94v-8.37H5.5v8.37z"/></svg></div><div style="position:absolute;left:1908px;top:190.5px;width:12px;height:634.0px;background:#fdfdfd;"></div><div style="position:absolute;left:1912px;top:194.5px;width:4px;height:626.0px;background:#d8d8d8;"></div></div>
<div id="ov"></div>
<svg width="970" height="737" viewBox="0 0 970 737" style="position:absolute;left:252px;top:141px;z-index:20;font-family:'Liberation Sans',sans-serif"><rect x="0.05" y="0.1" width="968.65" height="735.1" fill="#1fe540"/><rect x="10.1" y="10.55" width="948.4" height="714.25" fill="#fff"/><path d="M268.20 54.08V628.00" stroke="#DEE2EC" stroke-width="1"/><path d="M412.20 54.08V628.00" stroke="#DEE2EC" stroke-width="1"/><path d="M556.20 54.08V628.00" stroke="#DEE2EC" stroke-width="1"/><path d="M700.20 54.08V628.00" stroke="#DEE2EC" stroke-width="1"/><path d="M844.20 54.08V628.00" stroke="#DEE2EC" stroke-width="1"/><path d="M124.50 555.70H844.50" stroke="#DEE2EC" stroke-width="1"/><path d="M124.50 484.70H844.50" stroke="#DEE2EC" stroke-width="1"/><path d="M124.50 412.70H844.50" stroke="#DEE2EC" stroke-width="1"/><path d="M124.50 340.70H844.50" stroke="#DEE2EC" stroke-width="1"/><path d="M124.50 268.70H844.50" stroke="#DEE2EC" stroke-width="1"/><path d="M124.50 197.70H844.50" stroke="#DEE2EC" stroke-width="1"/><path d="M124.50 125.70H844.50" stroke="#DEE2EC" stroke-width="1"/><path d="M124.50 53.70H844.50" stroke="#DEE2EC" stroke-width="1"/><path d="M124.50 54.08V628.00" stroke="#6E7079" stroke-width="1"/><path d="M124.50 628.00H844.50" stroke="#6E7079" stroke-width="1"/><path d="M124.50 628.00v5" stroke="#6E7079" stroke-width="1"/><text x="124.50" y="646.60" text-anchor="middle" fill="#6E7079" font-size="12" textLength="30.6" lengthAdjust="spacing">2,000</text><path d="M268.50 628.00v5" stroke="#6E7079" stroke-width="1"/><text x="268.50" y="646.60" text-anchor="middle" fill="#6E7079" font-size="12" textLength="30.6" lengthAdjust="spacing">3,000</text><path d="M412.50 628.00v5" stroke="#6E7079" stroke-width="1"/><text x="412.50" y="646.60" text-anchor="middle" fill="#6E7079" font-size="12" textLength="30.6" lengthAdjust="spacing">4,000</text><path d="M556.50 628.00v5" stroke="#6E7079" stroke-width="1"/><text x="556.50" y="646.60" text-anchor="middle" fill="#6E7079" font-size="12" textLength="30.6" lengthAdjust="spacing">5,000</text><path d="M700.50 628.00v5" stroke="#6E7079" stroke-width="1"/><text x="700.50" y="646.60" text-anchor="middle" fill="#6E7079" font-size="12" textLength="30.6" lengthAdjust="spacing">6,000</text><path d="M844.50 628.00v5" stroke="#6E7079" stroke-width="1"/><text x="844.50" y="646.60" text-anchor="middle" fill="#6E7079" font-size="12" textLength="30.6" lengthAdjust="spacing">7,000</text><path d="M124.50 628.00h-5" stroke="#6E7079" stroke-width="1"/><text x="116.10" y="633.00" text-anchor="end" fill="#6E7079" font-size="12" textLength="20.6" lengthAdjust="spacing">160</text><path d="M124.50 555.70h-5" stroke="#6E7079" stroke-width="1"/><text x="116.10" y="560.70" text-anchor="end" fill="#6E7079" font-size="12" textLength="20.6" lengthAdjust="spacing">170</text><path d="M124.50 484.70h-5" stroke="#6E7079" stroke-width="1"/><text x="116.10" y="489.70" text-anchor="end" fill="#6E7079" font-size="12" textLength="20.6" lengthAdjust="spacing">180</text><path d="M124.50 412.70h-5" stroke="#6E7079" stroke-width="1"/><text x="116.10" y="417.70" text-anchor="end" fill="#6E7079" font-size="12" textLength="20.6" lengthAdjust="spacing">190</text><path d="M124.50 340.70h-5" stroke="#6E7079" stroke-width="1"/><text x="116.10" y="345.70" text-anchor="end" fill="#6E7079" font-size="12" textLength="20.6" lengthAdjust="spacing">200</text><path d="M124.50 268.70h-5" stroke="#6E7079" stroke-width="1"/><text x="116.10" y="273.70" text-anchor="end" fill="#6E7079" font-size="12" textLength="20.6" lengthAdjust="spacing">210</text><path d="M124.50 197.70h-5" stroke="#6E7079" stroke-width="1"/><text x="116.10" y="202.70" text-anchor="end" fill="#6E7079" font-size="12" textLength="20.6" lengthAdjust="spacing">220</text><path d="M124.50 125.70h-5" stroke="#6E7079" stroke-width="1"/><text x="116.10" y="130.70" text-anchor="end" fill="#6E7079" font-size="12" textLength="20.6" lengthAdjust="spacing">230</text><path d="M124.50 53.70h-5" stroke="#6E7079" stroke-width="1"/><text x="116.10" y="58.70" text-anchor="end" fill="#6E7079" font-size="12" textLength="20.6" lengthAdjust="spacing">240</text><text x="484.30" y="664.20" text-anchor="middle" fill="#6E7079" font-size="12" textLength="81.5" lengthAdjust="spacing">Body Mass (g)</text><text transform="translate(82.80 341.00) rotate(-90)" text-anchor="middle" fill="#6E7079" font-size="12" textLength="115" lengthAdjust="spacing">Flipper length (mm)</text><g fill="#e74c3c" fill-opacity=".8"><circle cx="375.9" cy="476.7" r="5"/><circle cx="383.2" cy="440.9" r="5"/><circle cx="303.9" cy="376.3" r="5"/><circle cx="332.7" cy="390.7" r="5"/><circle cx="361.6" cy="412.2" r="5"/><circle cx="357.9" cy="476.7" r="5"/><circle cx="509.2" cy="376.3" r="5"/><circle cx="336.3" cy="390.7" r="5"/><circle cx="447.9" cy="412.2" r="5"/><circle cx="311.2" cy="440.9" r="5"/><circle cx="368.7" cy="483.9" r="5"/><circle cx="296.7" cy="469.6" r="5"/><circle cx="383.2" cy="405.0" r="5"/><circle cx="469.5" cy="354.8" r="5"/><circle cx="368.7" cy="448.0" r="5"/><circle cx="332.7" cy="376.3" r="5"/><circle cx="483.9" cy="362.0" r="5"/><circle cx="314.7" cy="455.2" r="5"/><circle cx="440.7" cy="383.5" r="5"/><circle cx="325.6" cy="527.0" r="5"/><circle cx="354.3" cy="483.9" r="5"/><circle cx="383.2" cy="419.4" r="5"/><circle cx="404.7" cy="448.0" r="5"/><circle cx="383.2" cy="483.9" r="5"/><circle cx="383.2" cy="433.7" r="5"/><circle cx="347.2" cy="462.4" r="5"/><circle cx="296.7" cy="433.7" r="5"/><circle cx="289.6" cy="541.3" r="5"/><circle cx="404.7" cy="483.9" r="5"/><circle cx="303.9" cy="498.3" r="5"/><circle cx="397.5" cy="498.3" r="5"/><circle cx="311.2" cy="426.5" r="5"/><circle cx="397.5" cy="455.2" r="5"/><circle cx="314.7" cy="376.3" r="5"/><circle cx="433.5" cy="369.1" r="5"/><circle cx="404.7" cy="412.2" r="5"/><circle cx="347.2" cy="483.9" r="5"/><circle cx="311.2" cy="476.7" r="5"/><circle cx="505.5" cy="455.2" r="5"/><circle cx="289.6" cy="469.6" r="5"/><circle cx="397.5" cy="376.3" r="5"/><circle cx="282.3" cy="440.9" r="5"/><circle cx="469.5" cy="369.1" r="5"/><circle cx="267.9" cy="448.0" r="5"/><circle cx="498.3" cy="412.2" r="5"/><circle cx="329.2" cy="469.6" r="5"/><circle cx="264.3" cy="491.1" r="5"/><circle cx="332.7" cy="412.2" r="5"/><circle cx="433.5" cy="405.0" r="5"/><circle cx="339.9" cy="440.9" r="5"/><circle cx="455.2" cy="426.5" r="5"/><circle cx="332.7" cy="412.2" r="5"/><circle cx="419.2" cy="340.4" r="5"/><circle cx="253.6" cy="433.7" r="5"/><circle cx="368.7" cy="405.0" r="5"/><circle cx="347.2" cy="440.9" r="5"/><circle cx="383.2" cy="390.7" r="5"/><circle cx="246.3" cy="476.7" r="5"/><circle cx="375.9" cy="383.5" r="5"/><circle cx="289.6" cy="448.0" r="5"/><circle cx="469.5" cy="376.3" r="5"/><circle cx="354.3" cy="448.0" r="5"/><circle cx="419.2" cy="397.8" r="5"/><circle cx="246.3" cy="455.2" r="5"/><circle cx="404.7" cy="397.8" r="5"/><circle cx="318.3" cy="376.3" r="5"/><circle cx="426.3" cy="426.5" r="5"/><circle cx="275.2" cy="412.2" r="5"/><circle cx="476.7" cy="354.8" r="5"/><circle cx="354.3" cy="412.2" r="5"/><circle cx="397.5" cy="412.2" r="5"/><circle cx="347.2" cy="369.1" r="5"/><circle cx="433.5" cy="362.0" r="5"/><circle cx="368.7" cy="412.2" r="5"/><circle cx="447.9" cy="376.3" r="5"/><circle cx="368.7" cy="405.0" r="5"/><circle cx="397.5" cy="455.2" r="5"/><circle cx="347.2" cy="433.7" r="5"/><circle cx="411.9" cy="376.3" r="5"/><circle cx="296.7" cy="419.4" r="5"/><circle cx="512.8" cy="369.1" r="5"/><circle cx="383.2" cy="433.7" r="5"/><circle cx="440.7" cy="390.7" r="5"/><circle cx="318.3" cy="405.0" r="5"/><circle cx="347.2" cy="383.5" r="5"/><circle cx="383.2" cy="412.2" r="5"/><circle cx="339.9" cy="419.4" r="5"/><circle cx="404.7" cy="419.4" r="5"/><circle cx="354.3" cy="412.2" r="5"/><circle cx="347.2" cy="326.1" r="5"/><circle cx="455.2" cy="304.6" r="5"/><circle cx="325.6" cy="448.0" r="5"/><circle cx="476.7" cy="440.9" r="5"/><circle cx="311.2" cy="433.7" r="5"/><circle cx="455.2" cy="283.0" r="5"/><circle cx="368.7" cy="412.2" r="5"/><circle cx="462.3" cy="369.1" r="5"/><circle cx="253.6" cy="498.3" r="5"/><circle cx="426.3" cy="397.8" r="5"/><circle cx="372.3" cy="397.8" r="5"/><circle cx="516.4" cy="318.9" r="5"/><circle cx="278.7" cy="462.4" r="5"/><circle cx="447.9" cy="412.2" r="5"/><circle cx="257.1" cy="390.7" r="5"/><circle cx="347.2" cy="455.2" r="5"/><circle cx="375.9" cy="347.6" r="5"/><circle cx="397.5" cy="412.2" r="5"/><circle cx="293.2" cy="476.7" r="5"/><circle cx="523.5" cy="362.0" r="5"/><circle cx="386.7" cy="354.8" r="5"/><circle cx="498.3" cy="405.0" r="5"/><circle cx="296.7" cy="390.7" r="5"/><circle cx="451.5" cy="362.0" r="5"/><circle cx="397.5" cy="405.0" r="5"/><circle cx="422.7" cy="369.1" r="5"/><circle cx="253.6" cy="426.5" r="5"/><circle cx="379.6" cy="347.6" r="5"/><circle cx="318.3" cy="419.4" r="5"/><circle cx="314.7" cy="419.4" r="5"/><circle cx="289.6" cy="433.7" r="5"/><circle cx="339.9" cy="354.8" r="5"/><circle cx="332.7" cy="512.6" r="5"/><circle cx="393.9" cy="326.1" r="5"/><circle cx="275.2" cy="440.9" r="5"/><circle cx="411.9" cy="347.6" r="5"/><circle cx="307.6" cy="405.0" r="5"/><circle cx="455.2" cy="376.3" r="5"/><circle cx="275.2" cy="405.0" r="5"/><circle cx="411.9" cy="268.7" r="5"/><circle cx="314.7" cy="412.2" r="5"/><circle cx="339.9" cy="362.0" r="5"/><circle cx="339.9" cy="390.7" r="5"/><circle cx="480.3" cy="347.6" r="5"/><circle cx="329.2" cy="433.7" r="5"/><circle cx="397.5" cy="412.2" r="5"/><circle cx="293.2" cy="405.0" r="5"/><circle cx="408.3" cy="340.4" r="5"/><circle cx="325.6" cy="448.0" r="5"/><circle cx="447.9" cy="390.7" r="5"/><circle cx="325.6" cy="390.7" r="5"/><circle cx="336.3" cy="433.7" r="5"/><circle cx="275.2" cy="426.5" r="5"/><circle cx="372.3" cy="412.2" r="5"/><circle cx="267.9" cy="397.8" r="5"/><circle cx="361.6" cy="448.0" r="5"/><circle cx="447.9" cy="412.2" r="5"/><circle cx="336.3" cy="455.2" r="5"/><circle cx="332.7" cy="376.3" r="5"/><circle cx="375.9" cy="390.7" r="5"/><circle cx="368.7" cy="433.7" r="5"/><circle cx="411.9" cy="333.3" r="5"/></g><g fill="#3498db" fill-opacity=".8"><circle cx="339.9" cy="397.8" r="5"/><circle cx="397.5" cy="369.1" r="5"/><circle cx="361.6" cy="390.7" r="5"/><circle cx="343.6" cy="426.5" r="5"/><circle cx="372.3" cy="362.0" r="5"/><circle cx="404.7" cy="354.8" r="5"/><circle cx="303.9" cy="498.3" r="5"/><circle cx="375.9" cy="362.0" r="5"/><circle cx="433.5" cy="376.3" r="5"/><circle cx="368.7" cy="354.8" r="5"/><circle cx="383.2" cy="390.7" r="5"/><circle cx="379.6" cy="383.5" r="5"/><circle cx="368.7" cy="448.0" r="5"/><circle cx="419.2" cy="333.3" r="5"/><circle cx="350.7" cy="412.2" r="5"/><circle cx="419.2" cy="333.3" r="5"/><circle cx="311.2" cy="362.0" r="5"/><circle cx="368.7" cy="476.7" r="5"/><circle cx="332.7" cy="412.2" r="5"/><circle cx="469.5" cy="376.3" r="5"/><circle cx="354.3" cy="476.7" r="5"/><circle cx="325.6" cy="405.0" r="5"/><circle cx="253.6" cy="433.7" r="5"/><circle cx="383.2" cy="390.7" r="5"/><circle cx="311.2" cy="376.3" r="5"/><circle cx="433.5" cy="362.0" r="5"/><circle cx="325.6" cy="340.4" r="5"/><circle cx="383.2" cy="340.4" r="5"/><circle cx="368.7" cy="405.0" r="5"/><circle cx="491.2" cy="304.6" r="5"/><circle cx="296.7" cy="433.7" r="5"/><circle cx="455.2" cy="333.3" r="5"/><circle cx="318.3" cy="433.7" r="5"/><circle cx="426.3" cy="318.9" r="5"/><circle cx="354.3" cy="376.3" r="5"/><circle cx="397.5" cy="347.6" r="5"/><circle cx="390.3" cy="376.3" r="5"/><circle cx="527.2" cy="268.7" r="5"/><circle cx="224.8" cy="397.8" r="5"/><circle cx="483.9" cy="304.6" r="5"/><circle cx="404.7" cy="268.7" r="5"/><circle cx="361.6" cy="433.7" r="5"/><circle cx="347.2" cy="369.1" r="5"/><circle cx="339.9" cy="369.1" r="5"/><circle cx="365.2" cy="369.1" r="5"/><circle cx="476.7" cy="333.3" r="5"/><circle cx="325.6" cy="412.2" r="5"/><circle cx="455.2" cy="254.4" r="5"/><circle cx="303.9" cy="433.7" r="5"/><circle cx="365.2" cy="354.8" r="5"/><circle cx="314.7" cy="347.6" r="5"/><circle cx="404.7" cy="333.3" r="5"/><circle cx="354.3" cy="390.7" r="5"/><circle cx="419.2" cy="318.9" r="5"/><circle cx="318.3" cy="433.7" r="5"/><circle cx="332.7" cy="362.0" r="5"/><circle cx="303.9" cy="405.0" r="5"/><circle cx="419.2" cy="318.9" r="5"/><circle cx="383.2" cy="326.1" r="5"/><circle cx="343.6" cy="383.5" r="5"/><circle cx="404.7" cy="297.4" r="5"/><circle cx="361.6" cy="419.4" r="5"/><circle cx="361.6" cy="376.3" r="5"/><circle cx="411.9" cy="290.2" r="5"/><circle cx="325.6" cy="326.1" r="5"/><circle cx="379.6" cy="390.7" r="5"/><circle cx="426.3" cy="268.7" r="5"/><circle cx="379.6" cy="354.8" r="5"/></g><g fill="#f1c40f" fill-opacity=".8"><circle cx="483.9" cy="261.5" r="5"/><circle cx="656.8" cy="125.2" r="5"/><circle cx="476.7" cy="268.7" r="5"/><circle cx="656.8" cy="211.3" r="5"/><circle cx="613.5" cy="232.8" r="5"/><circle cx="491.2" cy="268.7" r="5"/><circle cx="527.2" cy="261.5" r="5"/><circle cx="584.8" cy="204.1" r="5"/><circle cx="469.5" cy="275.9" r="5"/><circle cx="577.5" cy="232.8" r="5"/><circle cx="505.5" cy="240.0" r="5"/><circle cx="635.2" cy="225.7" r="5"/><circle cx="505.5" cy="240.0" r="5"/><circle cx="678.4" cy="247.2" r="5"/><circle cx="440.7" cy="268.7" r="5"/><circle cx="678.4" cy="218.5" r="5"/><circle cx="433.5" cy="268.7" r="5"/><circle cx="743.1" cy="189.8" r="5"/><circle cx="527.2" cy="275.9" r="5"/><circle cx="606.4" cy="182.6" r="5"/><circle cx="656.8" cy="211.3" r="5"/><circle cx="556.0" cy="232.8" r="5"/><circle cx="469.5" cy="247.2" r="5"/><circle cx="563.2" cy="232.8" r="5"/><circle cx="556.0" cy="232.8" r="5"/><circle cx="570.4" cy="232.8" r="5"/><circle cx="426.3" cy="225.7" r="5"/><circle cx="649.5" cy="232.8" r="5"/><circle cx="498.3" cy="268.7" r="5"/><circle cx="635.2" cy="197.0" r="5"/><circle cx="592.0" cy="182.6" r="5"/><circle cx="512.8" cy="275.9" r="5"/><circle cx="563.2" cy="290.2" r="5"/><circle cx="707.1" cy="125.2" r="5"/><circle cx="577.5" cy="197.0" r="5"/><circle cx="613.5" cy="197.0" r="5"/><circle cx="548.8" cy="247.2" r="5"/><circle cx="592.0" cy="204.1" r="5"/><circle cx="462.3" cy="283.0" r="5"/><circle cx="606.4" cy="283.0" r="5"/><circle cx="404.7" cy="283.0" r="5"/><circle cx="656.8" cy="161.1" r="5"/><circle cx="455.2" cy="268.7" r="5"/><circle cx="520.0" cy="225.7" r="5"/><circle cx="635.2" cy="182.6" r="5"/><circle cx="541.5" cy="218.5" r="5"/><circle cx="440.7" cy="268.7" r="5"/><circle cx="613.5" cy="161.1" r="5"/><circle cx="570.4" cy="247.2" r="5"/><circle cx="599.2" cy="232.8" r="5"/><circle cx="534.4" cy="268.7" r="5"/><circle cx="599.2" cy="197.0" r="5"/><circle cx="469.5" cy="268.7" r="5"/><circle cx="556.0" cy="161.1" r="5"/><circle cx="541.5" cy="218.5" r="5"/><circle cx="563.2" cy="197.0" r="5"/><circle cx="455.2" cy="283.0" r="5"/><circle cx="556.0" cy="197.0" r="5"/><circle cx="476.7" cy="283.0" r="5"/><circle cx="635.2" cy="168.3" r="5"/><circle cx="440.7" cy="283.0" r="5"/><circle cx="599.2" cy="189.8" r="5"/><circle cx="469.5" cy="240.0" r="5"/><circle cx="649.5" cy="118.0" r="5"/><circle cx="512.8" cy="204.1" r="5"/><circle cx="656.8" cy="125.2" r="5"/><circle cx="505.5" cy="240.0" r="5"/><circle cx="671.1" cy="132.4" r="5"/><circle cx="512.8" cy="197.0" r="5"/><circle cx="635.2" cy="175.4" r="5"/><circle cx="520.0" cy="225.7" r="5"/><circle cx="556.0" cy="189.8" r="5"/><circle cx="570.4" cy="189.8" r="5"/><circle cx="584.8" cy="218.5" r="5"/><circle cx="512.8" cy="225.7" r="5"/><circle cx="671.1" cy="125.2" r="5"/><circle cx="498.3" cy="275.9" r="5"/><circle cx="700.0" cy="197.0" r="5"/><circle cx="520.0" cy="232.8" r="5"/><circle cx="692.8" cy="175.4" r="5"/><circle cx="501.9" cy="254.4" r="5"/><circle cx="620.8" cy="189.8" r="5"/><circle cx="516.4" cy="254.4" r="5"/><circle cx="606.4" cy="168.3" r="5"/><circle cx="520.0" cy="254.4" r="5"/><circle cx="642.4" cy="139.6" r="5"/><circle cx="498.3" cy="211.3" r="5"/><circle cx="599.2" cy="211.3" r="5"/><circle cx="538.0" cy="254.4" r="5"/><circle cx="635.2" cy="125.2" r="5"/><circle cx="548.8" cy="211.3" r="5"/><circle cx="613.5" cy="139.6" r="5"/><circle cx="520.0" cy="254.4" r="5"/><circle cx="649.5" cy="168.3" r="5"/><circle cx="534.4" cy="240.0" r="5"/><circle cx="584.8" cy="153.9" r="5"/><circle cx="545.2" cy="225.7" r="5"/><circle cx="538.0" cy="182.6" r="5"/><circle cx="501.9" cy="318.9" r="5"/><circle cx="592.0" cy="161.1" r="5"/><circle cx="534.4" cy="204.1" r="5"/><circle cx="642.4" cy="139.6" r="5"/><circle cx="552.4" cy="232.8" r="5"/><circle cx="628.0" cy="139.6" r="5"/><circle cx="516.4" cy="225.7" r="5"/><circle cx="628.0" cy="232.8" r="5"/><circle cx="512.8" cy="268.7" r="5"/><circle cx="628.0" cy="204.1" r="5"/><circle cx="494.7" cy="283.0" r="5"/><circle cx="628.0" cy="275.9" r="5"/><circle cx="556.0" cy="225.7" r="5"/><circle cx="692.8" cy="132.4" r="5"/><circle cx="505.5" cy="247.2" r="5"/><circle cx="628.0" cy="125.2" r="5"/><circle cx="465.9" cy="218.5" r="5"/><circle cx="678.4" cy="125.2" r="5"/><circle cx="538.0" cy="218.5" r="5"/><circle cx="700.0" cy="182.6" r="5"/><circle cx="545.2" cy="240.0" r="5"/><circle cx="534.4" cy="232.8" r="5"/><circle cx="664.0" cy="182.6" r="5"/><circle cx="584.8" cy="254.4" r="5"/><circle cx="613.5" cy="247.2" r="5"/></g><rect x="337.20" y="679.10" width="19.8" height="13.7" rx="3.2" fill="#e74c3c"/><text x="367.30" y="690.70" fill="#333" font-size="12" textLength="36.3" lengthAdjust="spacing">Adelie</text><rect x="413.90" y="679.10" width="19.8" height="13.7" rx="3.2" fill="#3498db"/><text x="444.40" y="690.70" fill="#333" font-size="12" textLength="54.8" lengthAdjust="spacing">Chinstrap</text><rect x="509.90" y="679.10" width="19.8" height="13.7" rx="3.2" fill="#f1c40f"/><text x="540.30" y="690.70" fill="#333" font-size="12" textLength="42.2" lengthAdjust="spacing">Gentoo</text></svg><div style="position:absolute;left:80.9px;top:894.2px;width:27px;height:24.4px;border-radius:13px;background:#070b17;z-index:21"></div><span style="position:absolute;left:94.5px;top:906.6px;transform:translate(-50%,-50%);font:700 14px/1 'Liberation Serif',serif;color:#e4e4e4;z-index:22">57</span><div style="position:absolute;left:716.3px;top:935.4px;width:31.3px;height:40px;border-radius:15.6px 15.6px 0 0;background:#090909;z-index:21;box-shadow:0 0 5px rgba(0,0,0,.3)"></div><svg style="position:absolute;left:723.10px;top:941.1px;width:17.9px;height:17.9px;z-index:22" viewBox="0 0 24 24"><path fill="#505050" d="M13.464 19.83h8.922c.283 0 .562-.073.807-.21a1.6 1.6 0 0 0 .591-.574 1.53 1.53 0 0 0 .216-.783 1.53 1.53 0 0 0-.217-.782L17.792 7.414a1.6 1.6 0 0 0-.591-.573 1.65 1.65 0 0 0-.807-.21c-.283 0-.562.073-.807.21a1.6 1.6 0 0 0-.59.573L13.463 9.99 10.47 4.953a1.6 1.6 0 0 0-.591-.573 1.65 1.65 0 0 0-.807-.21c-.284 0-.562.073-.807.21a1.6 1.6 0 0 0-.591.573L.216 17.481a1.53 1.53 0 0 0-.217.782c0 .275.074.545.216.783a1.6 1.6 0 0 0 .59.574c.246.137.525.21.808.21h5.6c2.22 0 3.856-.946 4.982-2.79l2.733-4.593 1.464-2.457 4.395 7.382h-5.859Zm-6.341-2.46-3.908-.002 5.858-9.842 2.923 4.921-1.957 3.29c-.748 1.196-1.597 1.632-2.916 1.632"/></svg>
</body></html>
